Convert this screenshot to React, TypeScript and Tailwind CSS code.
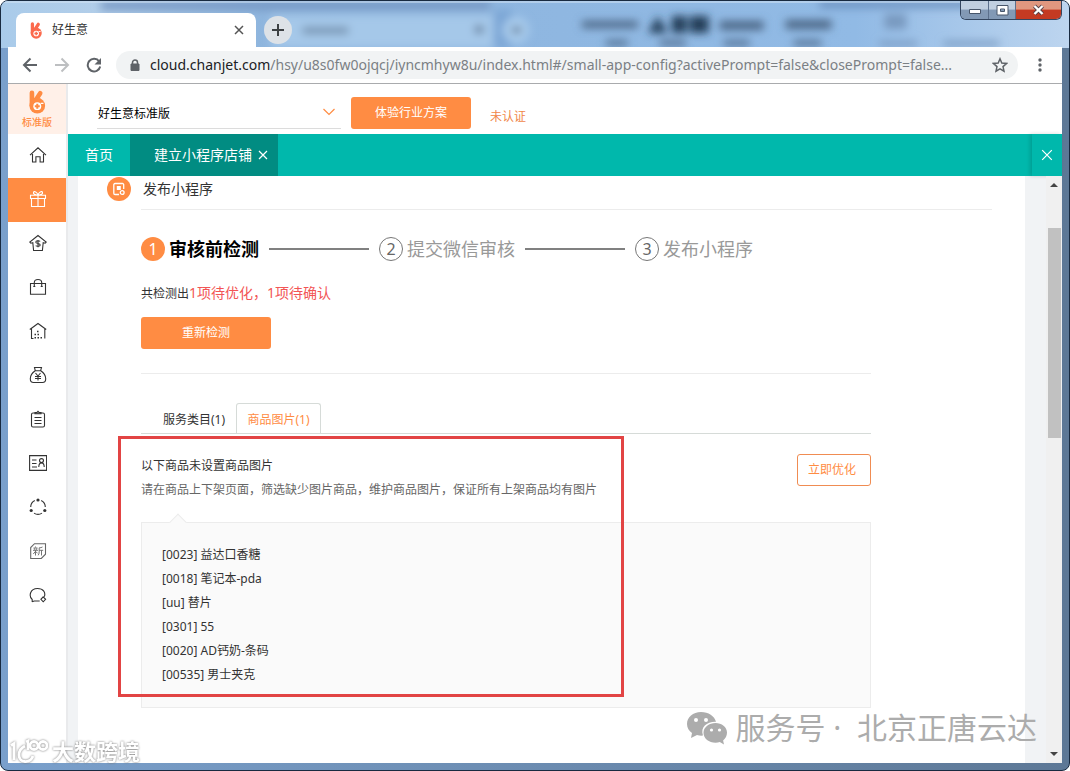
import type { ReactNode } from 'react';

const products = [
  '[0023] 益达口香糖',
  '[0018] 笔记本-pda',
  '[uu] 替片',
  '[0301] 55',
  '[0020] AD钙奶-条码',
  '[00535] 男士夹克'
];

const steps = ['审核前检测', '提交微信审核', '发布小程序'];

const Icon = ({ children, size = 18 }: { children: ReactNode; size?: number }) => (
  <svg width={size} height={size} viewBox="0 0 18 18" fill="none" stroke="currentColor" strokeWidth="1.1" aria-hidden="true">
    {children}
  </svg>
);

const menu = [
  {
    label: '首页',
    icon: <path d="M1 9.2 9 1.8l8 7.4M3.5 8v8h3.4v-5.2h4.2V16h3.4V8" />
  },
  {
    label: '营销',
    icon: <path d="M1.500 5.200h15v3.300h-15zM2.500 8.500v8h13v-8M9 5.200v11.300M9 5.200C6 5 4 3.800 4.500 2.300 5.200.8 8.200 1.800 9 5.200c.8-3.400 3.800-4.400 4.500-2.900C14 3.800 12 5 9 5.200" />
  },
  {
    label: '资金',
    icon: (
      <>
        <path d="M9 1.500.8 8l1 1.200 2-.6.800 7.900h8.800l.8-7.900 2 .6 1-1.200z" />
        <path d="M11.200 7.400C10 6.500 6.800 6.500 6.800 8.200s4.400 1 4.400 2.700-3.300 1.700-4.500.7M9 5.900v7.400" />
      </>
    )
  },
  {
    label: '商品',
    icon: (
      <>
        <path d="M1.500 5.500h15v10.800h-15zM5.300 8.500V4.500C5.300.5 12.700.5 12.700 4.500v4" />
        <path d="M4.300 8.500h2M11.700 8.500h2" />
      </>
    )
  },
  {
    label: '仓库',
    icon: (
      <>
        <path d="M.8 7.500 9 1.500l8.200 6M2.500 6.500v10h2M15.800 6.500v10" />
        <path d="M8 9.500h1.500M5.500 12.500H7M8.500 12.500H10M5.500 15.800H7M8.500 15.800H10M11.500 15.800H13" strokeWidth="1.500" />
      </>
    )
  },
  {
    label: '往来',
    icon: (
      <>
        <path d="M6.200 4.800C3 7 1.300 10 1.300 12.700c0 2.400 1 3.800 3.200 3.800h9c2.200 0 3.200-1.400 3.200-3.800 0-2.700-1.700-5.700-4.900-7.900zM5.500 1.500h7l-.9 3.300H6.300z" />
        <path d="m6.500 7 2.500 3 2.500-3M9 10v4.500M6 10.500h6M6 12.500h6" />
      </>
    )
  },
  {
    label: '单据',
    icon: (
      <>
        <rect x="2.500" y="3" width="13" height="14" rx="1.500" />
        <path d="M6 3.800h6V2.500h-1.800L9 1.200 7.800 2.500H6zM5.500 7.500h7M5.500 10.500h7M5.500 13.500h7" />
      </>
    )
  },
  {
    label: '客户',
    icon: (
      <>
        <path d="M.6 1.600h17v14.800H.6zM3 6h4.500M3 9.500h4.500M3 13h5" />
        <circle cx="12.500" cy="6.600" r="2" />
        <path d="M9.800 13c0-5.500 5.400-5.500 5.400 0" />
      </>
    )
  },
  {
    label: '协同',
    icon: (
      <>
        <path d="M5.800 2.600A7.300 7.300 0 0 0 1.700 9M12.200 2.600A7.300 7.300 0 0 1 16.300 9M5 15.100a7.300 7.300 0 0 0 8 0" />
        <g fill="currentColor" stroke="none">
          <circle cx="9" cy="2" r="1.600" />
          <circle cx="2.200" cy="12.500" r="1.600" />
          <circle cx="15.800" cy="12.500" r="1.600" />
        </g>
      </>
    )
  },
  {
    label: '新功能',
    icon: (
      <>
        <path d="M5.500 1.700h11v10.500l-4.200 4.300H1.700V5.500z" stroke="#666" />
        <path d="M6.500 4.500v1M4.500 6h4M5.300 6.300l.5 1.500M7.800 6.300l-.5 1.500M4 8.300h5M6.500 8.300v5.200M6.300 9.500 4.300 12M6.800 9.500 8.500 11.300M13.500 5c-1 .6-2 .8-3.300.8v4c0 1.500-.4 2.500-1 3.500M10.200 8.300h4M12.500 8.300v5.200" stroke="#666" strokeWidth=".9" />
      </>
    )
  },
  {
    label: '客服',
    icon: (
      <>
        <path d="M3.200 16V13.500C-.5 10 1 2.500 8.500 2.500c6 0 8.500 4.300 6.700 8.300M3.200 15.800l2-.8h5.500" />
        <path d="m14.200 10.800 2.400 2.500-2.400 2.500-2.300-2.500z" />
      </>
    )
  }
];

const Rabbit = ({ className }: { className: string }) => (
  <svg viewBox="0 0 18 26" className={className} aria-hidden="true">
    <path d="M3.500 3v14M12.500 3.500 7 12" stroke="currentColor" strokeWidth="5" strokeLinecap="round" />
    <circle cx="9.300" cy="17" r="8.500" fill="currentColor" />
    <circle cx="9.300" cy="17.500" r="4.300" fill="#fff" />
    <path d="M9.300 14.800v5.400M6.600 17.500h5.400" stroke="currentColor" strokeWidth="2.200" />
    <path d="M13 14.500h3" stroke="#fff" strokeWidth="1.400" />
  </svg>
);

const Cross = ({ className }: { className: string }) => (
  <svg viewBox="0 0 10 10" className={className} fill="none" stroke="currentColor" aria-hidden="true">
    <path d="m1 1 8 8M9 1 1 9" />
  </svg>
);

const GlassBackdrop = () => (
  <svg className="absolute inset-x-0 top-0 h-[47px] w-full" preserveAspectRatio="none" viewBox="0 0 1070 47" aria-hidden="true">
    <defs>
      <filter id="glass" x="-20%" y="-50%" width="140%" height="200%">
        <feGaussianBlur stdDeviation="4" />
      </filter>
      <linearGradient id="sky" x1="0" x2="1" y1="0" y2="0">
        <stop offset="0" stopColor="#a9cbea" />
        <stop offset=".1" stopColor="#b3cee9" />
        <stop offset=".25" stopColor="#8db4dd" />
        <stop offset=".8" stopColor="#91bae5" />
        <stop offset="1" stopColor="#bdd5ef" />
      </linearGradient>
    </defs>
    <path d="M0 0h1070v47H0z" fill="url(#sky)" />
    <g filter="url(#glass)">
      <path d="M100 0h390v9H100z" fill="#7799c5" />
      <path d="M270 14h223v33H270z" fill="#a5c8e9" />
      <path d="M494 9h18v38h-18z" fill="#7ba6d5" />
      <circle cx="516" cy="29" r="13" fill="#a9cced" />
      <path d="M512 26h9v6h-9zM475 25h8v7h-8z" fill="#526b89" />
      <path d="M302 26h46v7h-46z" fill="#7390ae" />
      <path d="M582 20h56v7h-56zM720 20h44v9h-44zM786 19h46v9h-46z" fill="#4c6685" />
      <path d="m648 32 10-17 10 17zM672 15h15v17h-15zM690 15h19v17h-19z" fill="#243d58" />
      <path d="M606 39h22v6h-22zM660 39h26v6h-26zM724 39h26v6h-26zM794 39h28v6h-28z" fill="#526f91" />
      <path d="M885 13h22v15h-22zM880 40h38v5h-38zM944 40h56v5h-56z" fill="#7899bf" />
      <path d="M820 0h160v7H820z" fill="#6c91bf" />
    </g>
    <path d="M0 1h1070" stroke="#d4e4f4" />
  </svg>
);

const TitleBar = () => (
  <header className="relative flex h-[46px] items-end">
    <div className="relative ml-2 flex h-[34px] w-60 items-center rounded-t-lg bg-white px-3">
      <Rabbit className="h-[17px] w-4 text-[#fb6a4d]" />
      <span className="ml-2 flex-1 text-xs text-[#333]">好生意</span>
      <button aria-label="关闭标签页" className="text-[#555]">
        <Cross className="h-[10px] w-[10px] stroke-[1.5]" />
      </button>
    </div>
    <button aria-label="新标签页" className="mb-[3px] ml-2 flex h-7 w-7 items-center justify-center rounded-full bg-[#dde2e7] text-[#3c4043]">
      <svg width="12" height="12" viewBox="0 0 12 12" stroke="currentColor" strokeWidth="2" aria-hidden="true">
        <path d="M6 0v12M0 6h12" />
      </svg>
    </button>
    <div className="ml-auto flex h-[19px] self-start overflow-hidden rounded-b-md border border-t-0 border-[#34465f]">
      <button aria-label="最小化" className="flex w-[27px] items-center justify-center bg-linear-to-b from-[#c0cfe0] from-45% to-[#8299b5] to-50%">
        <svg width="14" height="8" viewBox="0 0 14 8" aria-hidden="true">
          <path d="M1.500 3.500h11v4h-11z" fill="#fff" stroke="#48566a" />
        </svg>
      </button>
      <button aria-label="最大化" className="flex w-7 items-center justify-center border-x border-[#5c708c] bg-linear-to-b from-[#c0cfe0] from-45% to-[#8299b5] to-50%">
        <svg width="13" height="11" viewBox="0 0 13 11" aria-hidden="true">
          <path d="M1 .5h11v9.500H1zM4.500 4h4v2.500h-4z" fill="#fff" fillRule="evenodd" stroke="#48566a" />
        </svg>
      </button>
      <button aria-label="关闭" className="flex w-[45px] items-center justify-center bg-linear-to-b from-[#e0977f] from-45% to-[#c43a22] to-50%">
        <svg width="13" height="12" viewBox="0 0 13 12" fill="none" aria-hidden="true">
          <path d="m2.500 2 8 8M10.500 2l-8 8" stroke="#554046" strokeWidth="4" />
          <path d="m2.500 2 8 8M10.500 2l-8 8" stroke="#fff" strokeWidth="2.400" />
        </svg>
      </button>
    </div>
  </header>
);

const AddressBar = () => (
  <div className="flex h-[37px] items-center border-b border-[#a9abad] bg-white pl-[14px] text-[#5f6368]">
    <button aria-label="后退">
      <svg width="16" height="16" viewBox="0 0 16 16" fill="none" stroke="currentColor" strokeWidth="2" aria-hidden="true">
        <path d="M15 8H2.500M8.500 1.500 2 8l6.500 6.500" />
      </svg>
    </button>
    <button aria-label="前进" className="ml-4 text-[#bdbfc1]">
      <svg width="16" height="16" viewBox="0 0 16 16" fill="none" stroke="currentColor" strokeWidth="2" aria-hidden="true">
        <path d="M1 8h12.500M7.500 1.500 14 8l-6.500 6.500" />
      </svg>
    </button>
    <button aria-label="刷新" className="ml-4">
      <svg width="16" height="16" viewBox="0 0 16 16" fill="none" stroke="currentColor" strokeWidth="2" aria-hidden="true">
        <path d="M13.200 4.500A6.300 6.300 0 1 0 14.200 9.500" />
        <path d="M15 1v6.500H8.500z" fill="currentColor" stroke="none" />
      </svg>
    </button>
    <div className="ml-[14px] flex h-7 min-w-0 flex-1 items-center rounded-full bg-[#f1f3f4] px-[14px]">
      <svg width="10" height="12" viewBox="0 0 10 12" fill="none" aria-hidden="true">
        <path d="M1 5h8v6.500H1z" fill="currentColor" stroke="currentColor" strokeLinejoin="round" />
        <path d="M2.500 5V3.500a2.500 2.500 0 0 1 5 0V5" stroke="currentColor" strokeWidth="1.500" />
      </svg>
      <span className="ml-[10px] min-w-0 flex-1 truncate text-sm text-[#7b8084]">
        <span className="text-[#202124]">cloud.chanjet.com</span>
        /hsy/u8s0fw0ojqcj/iyncmhyw8u/index.html#/small-app-config?activePrompt=false&amp;closePrompt=false...
      </span>
      <button aria-label="收藏" className="-mr-1">
        <svg width="16" height="16" viewBox="0 0 16 16" fill="none" stroke="currentColor" strokeWidth="1.500" aria-hidden="true">
          <path d="m8 1.800 1.800 4.300 4.700.4-3.500 3.100 1 4.600L8 11.800l-4 2.400 1-4.600L1.500 6.500l4.700-.4z" />
        </svg>
      </button>
    </div>
    <button aria-label="更多" className="mr-[14px] ml-[14px]">
      <svg width="16" height="16" viewBox="0 0 16 16" fill="currentColor" aria-hidden="true">
        <circle cx="8" cy="3" r="1.700" />
        <circle cx="8" cy="8" r="1.700" />
        <circle cx="8" cy="13" r="1.700" />
      </svg>
    </button>
  </div>
);

const Sidebar = () => (
  <aside className="flex w-[60px] shrink-0 flex-col border-r-2 border-[#e9eaec] bg-white">
    <div className="flex h-[50px] flex-col items-center bg-[#fff0e8] pt-[6px] text-[#ff8c43]">
      <Rabbit className="h-6 w-[18px]" />
      <span className="text-[10px] leading-4 font-medium">标准版</span>
    </div>
    <nav className="flex flex-col">
      {menu.map((item, i) => (
        <a
          key={item.label}
          href="#"
          aria-label={item.label}
          className={`flex h-11 items-center justify-center pb-[2px] pl-[2px] ${i === 1 ? 'bg-[#ff8c43] text-white' : 'text-[#333]'}`}
        >
          <Icon>{item.icon}</Icon>
        </a>
      ))}
    </nav>
  </aside>
);

const TopBar = () => (
  <div className="flex h-[50px] items-end bg-white pb-[5px] pl-[29px]">
    <div className="relative w-[244px] border-b border-[#dcdcdc]">
      <select aria-label="产品版本" className="h-8 w-full appearance-none bg-transparent pt-1 pl-[1px] text-xs text-black">
        <option>好生意标准版</option>
      </select>
      <svg className="pointer-events-none absolute top-3 right-[6px]" width="12" height="8" viewBox="0 0 12 8" fill="none" stroke="#ff8c43" aria-hidden="true">
        <path d="m.5 1 5.500 5.500L11.500 1" strokeWidth="1.200" />
      </svg>
    </div>
    <button className="ml-[10px] h-8 w-[120px] rounded-[3px] bg-[#ff8c43] text-xs text-white">体验行业方案</button>
    <a href="#" className="ml-[19px] pb-1 text-xs text-[#f0874a]">未认证</a>
  </div>
);

const PageTabs = () => (
  <div className="flex h-[42px] bg-[#00b8ac] text-sm text-white">
    <button className="w-[62px]">首页</button>
    <div className="flex w-[148px] items-center bg-[#018c82] pl-6">
      <button>建立小程序店铺</button>
      <button aria-label="关闭页签" className="ml-[6px]">
        <Cross className="h-[10px] w-[10px] stroke-[1.2]" />
      </button>
    </div>
    <button aria-label="关闭全部" className="ml-auto flex w-[30px] items-center justify-center shadow-[-2px_0_4px_rgba(0,0,0,0.15)]">
      <Cross className="h-3 w-3" />
    </button>
  </div>
);

const Steps = () => (
  <ol className="mt-[25px] flex text-lg">
    {steps.map((step, i) => (
      <li key={step} className={`flex items-center ${i === 0 ? 'font-bold text-black' : 'text-[#999]'}`}>
        <span
          className={`mr-1 flex h-6 w-6 items-center justify-center rounded-full text-base font-normal ${
            i === 0 ? 'bg-[#ff8c43] text-white' : 'border border-[#777] text-[#666]'
          }`}
        >
          {i + 1}
        </span>
        <span className="leading-7">{step}</span>
        {i < steps.length - 1 && <span className="mx-[10px] h-[2px] w-[100px] bg-[#808080]" />}
      </li>
    ))}
  </ol>
);

const CheckResult = () => (
  <section className="relative max-w-[730px]">
    <div className="flex h-[30px] items-end border-b border-[#d6dbd8] pl-[11px] text-xs">
      <button className="h-[30px] w-[84px] pt-[3px] text-[#333]">服务类目(1)</button>
      <button className="h-[30px] w-[85px] rounded-t-[3px] border border-b-0 border-[#d6dbd8] bg-white pt-[3px] text-[#ff8c43]">
        商品图片(1)
      </button>
    </div>
    <div className="mt-5 flex items-start justify-between text-xs leading-6">
      <div>
        <h3 className="text-[#333]">以下商品未设置商品图片</h3>
        <p className="text-[#666]">请在商品上下架页面，筛选缺少图片商品，维护商品图片，保证所有上架商品均有图片</p>
      </div>
      <button className="h-8 w-[74px] rounded-[3px] border border-[#f08c52] pr-1 text-xs text-[#ff8c43]">立即优化</button>
    </div>
    <div className="relative mt-5 border border-[#ececec] bg-[#fafafa] p-5">
      <span className="absolute -top-[7px] left-[30px] h-3 w-3 rotate-45 border-t border-l border-[#ececec] bg-[#fafafa]" />
      <ul className="text-xs leading-6 text-[#333]">
        {products.map((product) => (
          <li key={product}>{product}</li>
        ))}
      </ul>
    </div>
    <div className="pointer-events-none absolute top-8 bottom-[11px] -left-[23px] w-[506px] border-3 border-[#e24444]" />
  </section>
);

const Content = () => (
  <main className="min-w-0 flex-1 bg-white pr-[33px] pl-[29px]">
    <div className="flex items-center pt-[1px]">
      <span className="flex h-6 w-6 items-center justify-center rounded-full bg-[#ff8c43] text-white">
        <svg width="14" height="14" viewBox="0 0 14 14" fill="none" stroke="currentColor" strokeWidth="1.300" aria-hidden="true">
          <path d="M7 12.500H3A1.200 1.200 0 0 1 1.800 11.300V2.700A1.200 1.200 0 0 1 3 1.500h7.500a1.200 1.200 0 0 1 1.200 1.200V7" />
          <path d="M4.800 4h4v4h-4z" fill="currentColor" stroke="none" />
          <circle cx="10.200" cy="10.500" r="1.900" />
        </svg>
      </span>
      <h2 className="ml-3 text-sm text-[#333]">发布小程序</h2>
    </div>
    <div className="ml-[34px]">
      <div className="mt-2 border-b border-[#ececec]" />
      <Steps />
      <p className="mt-[18px] text-xs leading-6 text-[#333]">
        共检测出<span className="text-sm leading-6 text-[#f25555]">1项待优化，1项待确认</span>
      </p>
      <button className="mt-[11px] block h-8 w-[130px] rounded-[3px] bg-[#ff8c43] text-xs text-white">重新检测</button>
      <div className="mt-6 mb-[30px] max-w-[730px] border-b border-[#ececec]" />
      <CheckResult />
    </div>
  </main>
);

const Scrollbar = () => (
  <div className="flex w-4 flex-col items-center bg-[#f0f0f0] py-[7px]" aria-hidden="true">
    <svg width="8" height="4" viewBox="0 0 8 4" fill="#444">
      <path d="M0 4 4 0l4 4z" />
    </svg>
    <div className="mt-[41px] h-[210px] w-[13px] bg-[#c1c1c1]" />
    <svg className="mt-auto" width="8" height="4" viewBox="0 0 8 4" fill="#444">
      <path d="m0 0 4 4 4-4z" />
    </svg>
  </div>
);

const WechatMark = () => (
  <div className="pointer-events-none absolute right-8 bottom-[22px] flex items-center text-[#acacac]">
    <svg width="42" height="34" viewBox="0 0 42 34" fill="currentColor" aria-hidden="true">
      <path d="M15 1C7 1 1 6 1 13c0 4 2 7 5 9l-1 5 6-3c2 .6 4 .8 6 .6C14 16 21 10.500 30 10.800 28.500 5 22.500 1 15 1z" />
      <path d="M41 21.500C41 15.900 35.700 12 29.500 12S17.500 16 17.500 21.800s5.500 10 12 10c1.700 0 3-.2 4.300-.7l4.200 2.400-.9-4c2.500-2 3.900-4.700 3.900-8z" />
      <g fill="#fff">
        <circle cx="10" cy="9" r="2" />
        <circle cx="20" cy="9" r="2" />
        <circle cx="25.500" cy="19" r="1.600" />
        <circle cx="33.500" cy="19" r="1.600" />
      </g>
    </svg>
    <span className="ml-2 text-[30px] leading-10 whitespace-pre">服务号 ·  北京正唐云达</span>
  </div>
);

const SiteMark = () => (
  <div className="pointer-events-none absolute bottom-[3px] left-[9px] flex items-center text-white drop-shadow-[0_0_1px_#777]">
    <svg width="38" height="27" viewBox="0 0 38 27" fill="none" stroke="currentColor" strokeWidth="2.800" aria-hidden="true">
      <path d="M1 7.500 4 5.500V22M23 18c-3 8-14 7-14-1 0-4 2-7 6-9M16 4l2-1v9" />
      <circle cx="24" cy="7.500" r="4" />
      <circle cx="33" cy="7.500" r="4" />
    </svg>
    <span className="ml-1 text-[22px] leading-8 font-bold">大数跨境</span>
  </div>
);

const App = () => (
  <div className="relative flex min-h-screen flex-col overflow-hidden rounded-lg border border-[#182a40] bg-linear-to-r from-[#7aa0cc] to-[#5d7896] px-[7px] pb-[7px] font-['Noto_Sans','Noto_Sans_CJK_SC',sans-serif]">
    <GlassBackdrop />
    <TitleBar />
    <div className="relative flex flex-1 flex-col">
      <AddressBar />
      <div className="flex flex-1 bg-[#f1f3f5]">
        <Sidebar />
        <div className="flex min-w-0 flex-1 flex-col">
          <TopBar />
          <PageTabs />
          <div className="flex flex-1 pl-[10px]">
            <Content />
            <div className="w-[21px]" />
            <Scrollbar />
          </div>
        </div>
      </div>
    </div>
    <WechatMark />
    <SiteMark />
  </div>
);

export default App;
